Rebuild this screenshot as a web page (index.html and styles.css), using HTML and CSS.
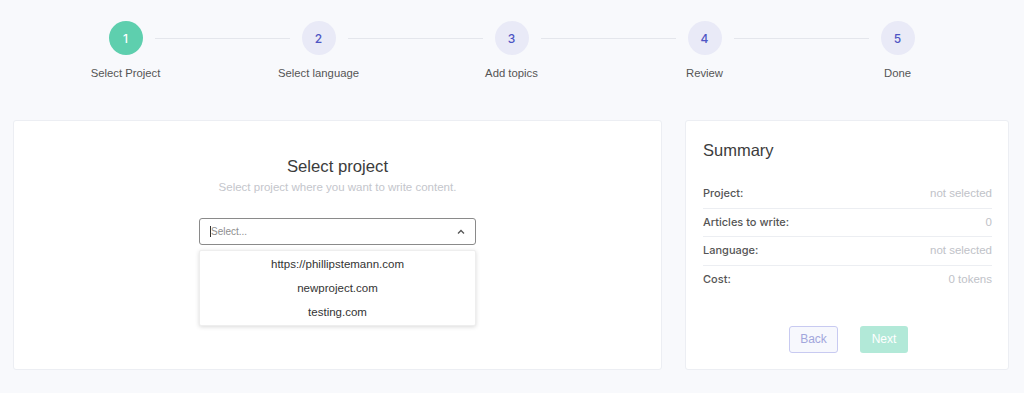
FILE: index.html
```html
<!DOCTYPE html>
<html>
<head>
<meta charset="utf-8">
<link rel="stylesheet" href="styles.css">
</head>
<body>
<div class="stepper">
  <div class="step active"><div class="circle">1</div><div class="label">Select Project</div></div>
  <div class="step"><div class="circle">2</div><div class="label">Select language</div></div>
  <div class="step"><div class="circle">3</div><div class="label">Add topics</div></div>
  <div class="step"><div class="circle">4</div><div class="label">Review</div></div>
  <div class="step last"><div class="circle">5</div><div class="label">Done</div></div>
</div>
<div class="main">
  <div class="card left">
    <h2 class="title">Select project</h2>
    <p class="subtitle">Select project where you want to write content.</p>
    <div class="select-wrap">
      <div class="select">
        <span class="caret"></span><span class="placeholder">Select...</span>
        <svg class="chev" width="8" height="6" viewBox="0 0 8 6"><path d="M1 4.5 L4 1.5 L7 4.5" fill="none" stroke="#555" stroke-width="1.3"/></svg>
      </div>
      <div class="menu">
        <div class="option">https://phillipstemann.com</div>
        <div class="option">newproject.com</div>
        <div class="option">testing.com</div>
      </div>
    </div>
  </div>
  <div class="card right">
    <h3 class="sum-title">Summary</h3>
    <div class="rows">
      <div class="row"><span class="k">Project:</span><span class="v">not selected</span></div>
      <div class="row"><span class="k">Articles to write:</span><span class="v">0</span></div>
      <div class="row"><span class="k">Language:</span><span class="v">not selected</span></div>
      <div class="row"><span class="k">Cost:</span><span class="v">0 tokens</span></div>
    </div>
    <div class="buttons">
      <button class="btn back">Back</button>
      <button class="btn next">Next</button>
    </div>
  </div>
</div>
</body>
</html>
```
FILE: styles.css
```css
* { box-sizing: border-box; }
html, body { margin: 0; padding: 0; }
body {
  background: #f8f9fc;
  font-family: "Liberation Sans", Arial, sans-serif;
  color: #444;
  width: 1024px;
  height: 393px;
  overflow: hidden;
}
.stepper {
  display: grid;
  grid-template-columns: repeat(5, 193px);
  padding: 21px 0 0 29px;
}
.step {
  position: relative;
  display: flex;
  flex-direction: column;
  align-items: center;
}
.step::after {
  content: "";
  position: absolute;
  top: 16.5px;
  left: calc(50% + 29px);
  width: 135px;
  height: 1px;
  background: #e4e6ec;
}
.step.last::after { display: none; }
.circle {
  width: 34px;
  height: 34px;
  border-radius: 50%;
  background: #e9eaf7;
  color: #4e55c4;
  font-family: Inter, sans-serif;
  font-size: 12px;
  font-weight: 500;
  display: flex;
  align-items: center;
  justify-content: center;
}
.step.active .circle {
  background: #5ecfae;
  color: #fff;
}
.label {
  margin-top: 10px;
  font-size: 11.3px;
  line-height: 16px;
  color: #555;
}
.main {
  display: flex;
  gap: 23px;
  margin-top: 39px;
  padding-left: 13px;
}
.card {
  background: #fff;
  border: 1px solid #eceef3;
  border-radius: 3px;
  height: 250px;
}
.card.left {
  width: 649px;
  padding-top: 34px;
  display: flex;
  flex-direction: column;
  align-items: center;
}
.title {
  margin: 0;
  font-size: 16.7px;
  line-height: 24px;
  font-weight: normal;
  color: #3c3c3c;
}
.subtitle {
  margin: 0;
  font-size: 11.5px;
  line-height: 16px;
  color: #c4c6cc;
}
.select-wrap {
  position: relative;
  margin-top: 23px;
  width: 277px;
}
.select {
  height: 27px;
  border: 1px solid #8a8a8a;
  border-radius: 3px;
  display: flex;
  align-items: center;
  padding-left: 10px;
  position: relative;
}
.caret {
  width: 1px;
  height: 11px;
  background: #333;
}
.placeholder {
  font-size: 10px;
  color: #8e8e8e;
}
.chev {
  position: absolute;
  right: 10px;
  top: 10px;
}
.menu {
  position: absolute;
  top: 32px;
  left: 0;
  width: 277px;
  background: #fff;
  border: 1px solid #eee;
  border-radius: 2px;
  box-shadow: 0 1px 4px rgba(0,0,0,0.15);
  padding: 1px 0;
}
.option {
  height: 24px;
  line-height: 24px;
  text-align: center;
  font-size: 11.5px;
  color: #333;
}
.card.right {
  width: 324px;
  padding: 18px 16px 0 17px;
  display: flex;
  flex-direction: column;
}
.sum-title {
  margin: 0;
  font-size: 16.5px;
  line-height: 22px;
  font-weight: normal;
  color: #3c3c3c;
}
.rows { margin-top: 19px; }
.row {
  height: 28.5px;
  display: flex;
  justify-content: space-between;
  align-items: center;
  border-bottom: 1px solid #eceef2;
  padding-bottom: 1px;
  font-size: 11.5px;
}
.row:last-child { border-bottom: none; height: 28px; }
.k { color: #555; font-family: Inter, sans-serif; font-weight: 500; font-size: 11px; }
.v { color: #c0c2c8; }
.buttons {
  display: flex;
  justify-content: center;
  gap: 22px;
  margin-top: 32px;
  padding-left: 2px;
}
.btn {
  height: 27px;
  border-radius: 3px;
  font-family: inherit;
  font-size: 12px;
  padding: 0;
}
.back {
  width: 49px;
  background: #f7f8fd;
  border: 1px solid #c8caf1;
  color: #a2a6dc;
}
.next {
  width: 48px;
  background: #b2e9d8;
  border: none;
  color: #fff;
}
```
